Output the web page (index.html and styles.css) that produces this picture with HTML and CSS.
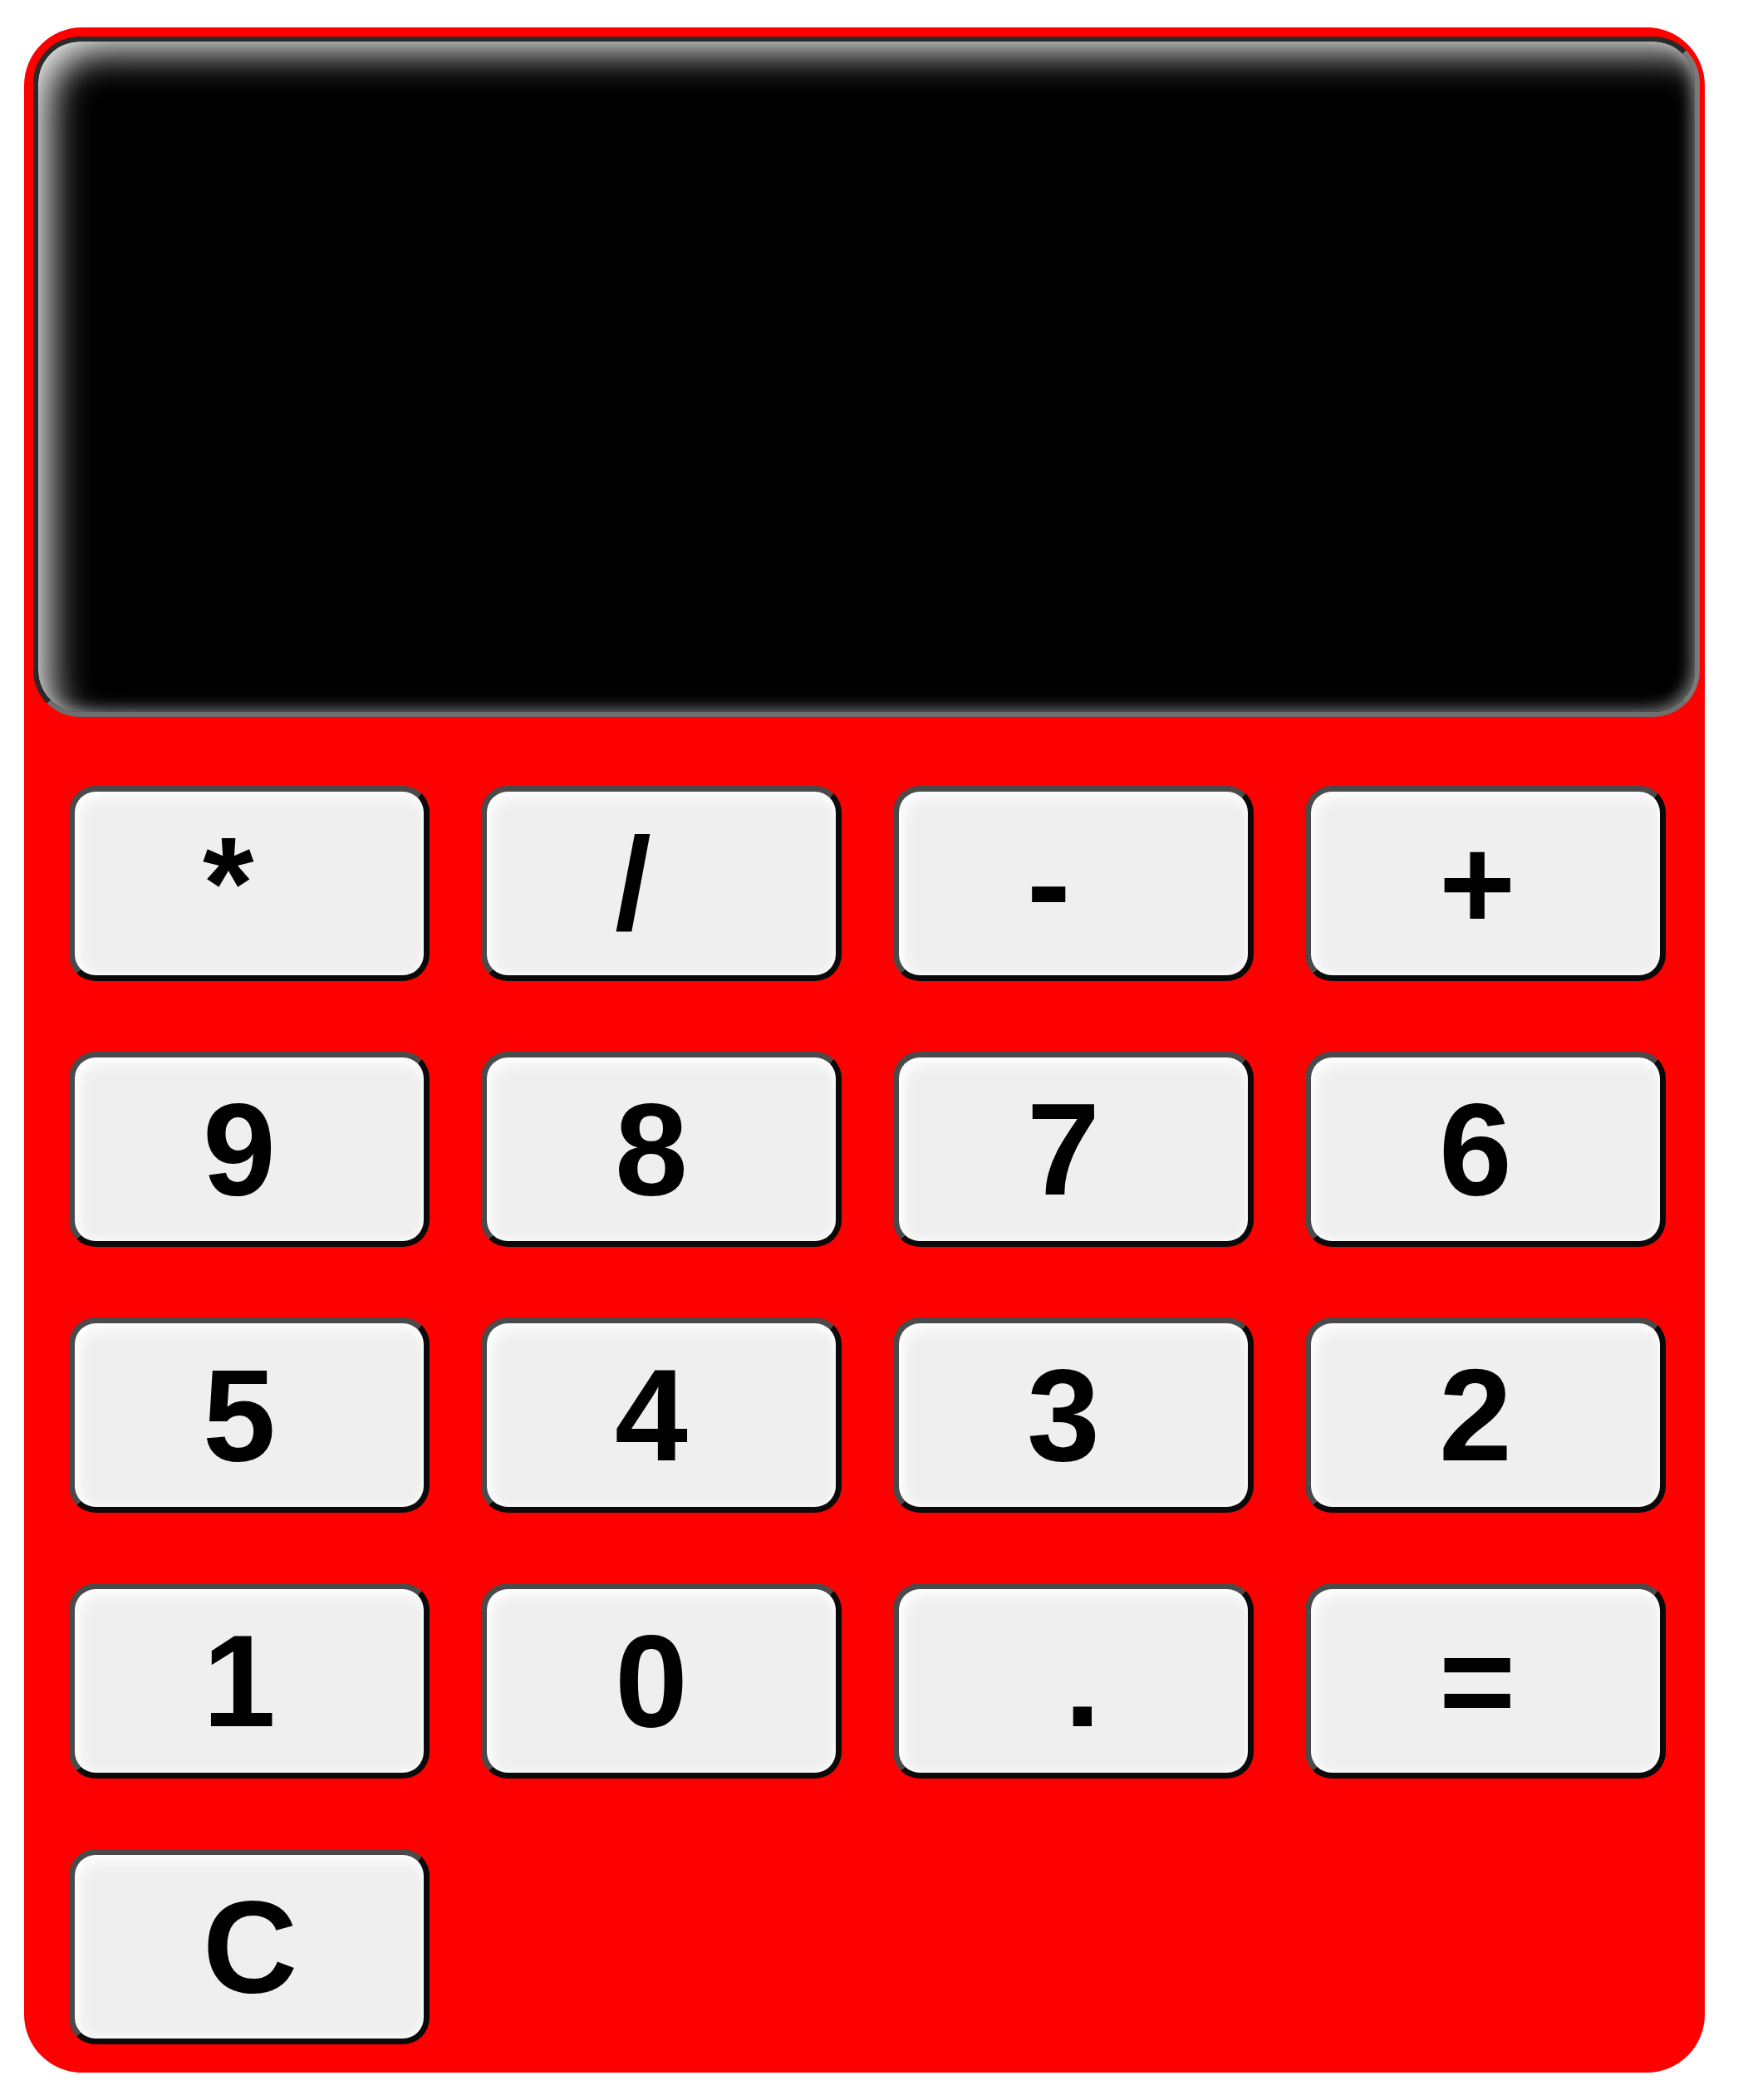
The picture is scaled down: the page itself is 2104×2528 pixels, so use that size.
FILE: index.html
```html
<!DOCTYPE html>
<html lang="en">
<head>
<meta charset="utf-8">
<title>Calculator</title>
<link rel="stylesheet" href="styles.css">
</head>
<body>
<div class="calculator">
  <div class="display"></div>
  <div class="keys">
    <button class="key">*</button>
    <button class="key">/</button>
    <button class="key">-</button>
    <button class="key">+</button>
    <button class="key">9</button>
    <button class="key">8</button>
    <button class="key">7</button>
    <button class="key">6</button>
    <button class="key">5</button>
    <button class="key">4</button>
    <button class="key">3</button>
    <button class="key">2</button>
    <button class="key">1</button>
    <button class="key">0</button>
    <button class="key key--dot">.</button>
    <button class="key">=</button>
    <button class="key">C</button>
  </div>
</div>
</body>
</html>
```
FILE: styles.css
```css
html, body {
  margin: 0;
  background: #ffffff;
}

.calculator {
  margin: 33px 0 0 29px;
  width: 2023px;
  height: 2462px;
  box-sizing: border-box;
  padding: 11px 6px 0 11px;
  background: #ff0000;
  border-radius: 70px;
}

.display {
  height: 819px;
  box-sizing: border-box;
  background: #000;
  border: 6px solid;
  border-color: #2a2a2a #7a7a7a #6e6e6e #2a2a2a;
  border-radius: 56px;
  box-shadow:
    inset 22px 20px 46px -8px rgba(255, 255, 255, 0.92),
    inset -8px -6px 18px -4px rgba(255, 255, 255, 0.4);
}

.keys {
  display: grid;
  grid-template-columns: repeat(4, 434px);
  grid-auto-rows: 235px;
  column-gap: 62px;
  row-gap: 85px;
  margin: 83px 0 0 43px;
}

.key {
  box-sizing: border-box;
  margin: 0;
  padding: 0 0 0 154px;
  border: 7px solid;
  border-color: #4a4a4a #0a0a0a #0a0a0a #4a4a4a;
  border-radius: 32px;
  background: #efefef;
  box-shadow:
    inset 0 0 12px #ffffff,
    inset 6px 8px 16px rgba(255, 255, 255, 0.9);
  color: #000;
  font-family: "Liberation Sans", Arial, sans-serif;
  font-weight: bold;
  font-size: 158px;
  text-align: left;
  cursor: pointer;
}

.key--dot {
  padding-left: 199px;
}
```
